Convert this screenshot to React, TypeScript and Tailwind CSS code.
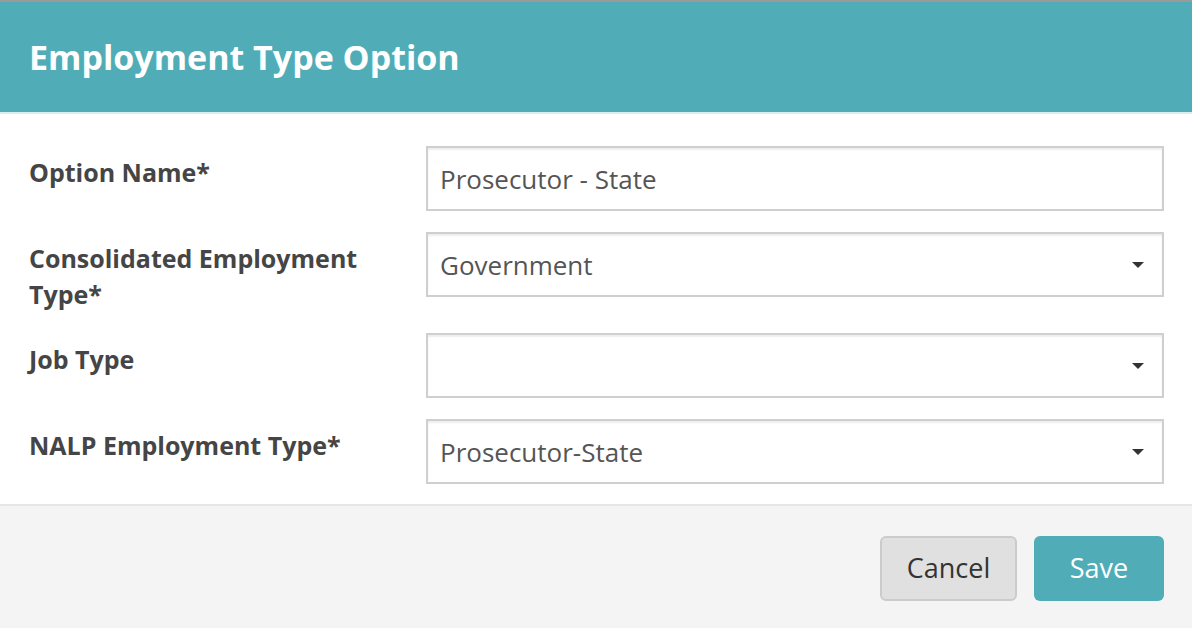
const font = { fontFamily: "'Open Sans', Lato, sans-serif" };

function Caret() {
  return (
    <svg width="14" height="8" viewBox="0 0 14 8" className="shrink-0">
      <path d="M1 1h12L7 7z" fill="#333" />
    </svg>
  );
}

function Field({
  label,
  value,
  select,
}: {
  label: React.ReactNode;
  value: string;
  select?: boolean;
}) {
  return (
    <div className="flex items-start">
      <label className="w-[397px] pt-2 pr-8 text-[25px] leading-[36px] font-bold text-[#454545]">
        {label}
      </label>
      <div className="flex h-[65px] flex-1 items-center justify-between border-2 border-[#cfcfcf] bg-white pl-3 pr-[17px] text-[26px] text-[#555] shadow-[inset_0_2px_2px_rgba(0,0,0,0.07)]">
        <span className="pt-[1px]">{value}</span>
        {select && <Caret />}
      </div>
    </div>
  );
}

export default function App() {
  return (
    <div className="h-[628px] w-[1192px] overflow-hidden bg-white" style={font}>
      {/* Header */}
      <div className="h-[114px] border-t-2 border-b-2 border-t-[#9a9a9a] border-b-[#d9eef0] bg-[#50adb7] pl-[29px] pt-[33px]">
        <h1 className="text-[34px] leading-[44px] font-bold text-white">
          Employment Type Option
        </h1>
      </div>

      {/* Body */}
      <div className="flex flex-col gap-[21px] pl-[29px] pr-[28px] pt-[32px] pb-[20px]">
        <Field label="Option Name*" value="Prosecutor - State" />
        <Field
          label={
            <>
              Consolidated Employment
              <br />
              Type*
            </>
          }
          value="Government"
          select
        />
        <Field label="Job Type" value="" select />
        <Field label="NALP Employment Type*" value="Prosecutor-State" select />
      </div>

      {/* Footer */}
      <div className="flex h-[200px] justify-end gap-[17px] border-t-2 border-[#e6e6e6] bg-[#f4f4f4] pr-[28px] pt-[30px]">
        <button className="h-[65px] w-[137px] rounded-[6px] border-2 border-[#cbcbcb] bg-[#e0e0e0] text-[27px] text-[#333]">
          Cancel
        </button>
        <button className="h-[65px] w-[130px] rounded-[6px] bg-[#50adb7] text-[27px] text-white">
          Save
        </button>
      </div>
    </div>
  );
}
